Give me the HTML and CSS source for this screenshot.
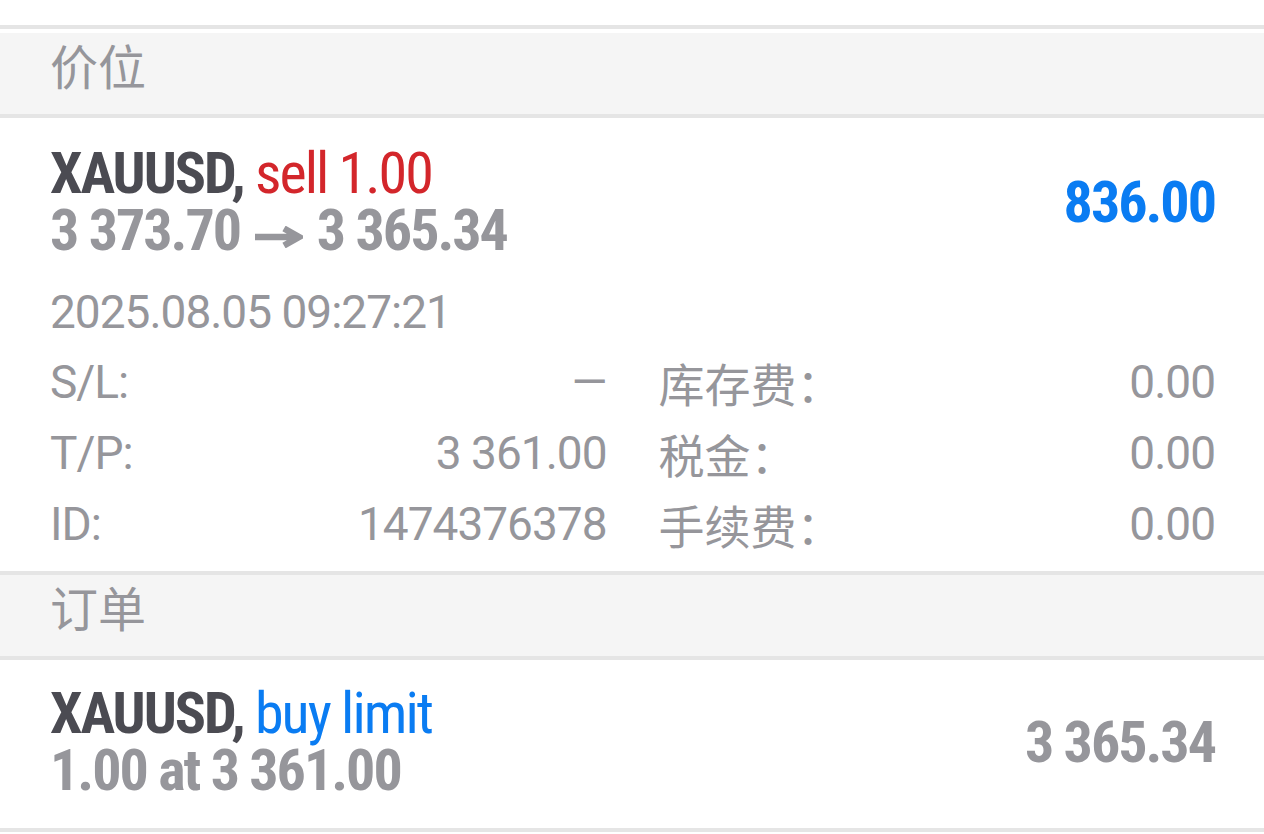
FILE: index.html
```html
<!DOCTYPE html>
<html lang="zh-CN">
<head>
<meta charset="utf-8">
<title>交易</title>
<link rel="stylesheet" href="styles.css">
</head>
<body>
<div class="top-space"></div>
<div class="divider"></div>
<div class="gap"></div>
<div class="section-head">价位</div>
<div class="divider"></div>
<section class="card">
  <div class="summary">
    <div class="titles">
      <div class="line1"><span class="sym">XAUUSD,</span> <span class="sell">sell 1.00</span></div>
      <div class="line2">3 373.70 <svg class="arrow" width="48" height="22" viewBox="0 0 48 22" aria-hidden="true"><path d="M0 11H43M29 2.5L44 11L29 19.5" fill="none" stroke="#96969b" stroke-width="6.5" stroke-linejoin="miter"/></svg> 3 365.34</div>
    </div>
    <div class="profit">836.00</div>
  </div>
  <div class="date">2025.08.05 09:27:21</div>
  <div class="details">
    <div class="kv"><span class="k">S/L:</span><span class="v">—</span></div>
    <div class="kv"><span class="k cjk">库存费：</span><span class="v">0.00</span></div>
    <div class="kv"><span class="k">T/P:</span><span class="v">3 361.00</span></div>
    <div class="kv"><span class="k cjk">税金：</span><span class="v">0.00</span></div>
    <div class="kv"><span class="k">ID:</span><span class="v">1474376378</span></div>
    <div class="kv"><span class="k cjk">手续费：</span><span class="v">0.00</span></div>
  </div>
</section>
<div class="divider"></div>
<div class="section-head">订单</div>
<div class="divider"></div>
<section class="card order">
  <div class="summary">
    <div class="titles">
      <div class="line1"><span class="sym">XAUUSD,</span> <span class="buy">buy limit</span></div>
      <div class="line2">1.00 at 3 361.00</div>
    </div>
    <div class="price">3 365.34</div>
  </div>
</section>
<div class="divider"></div>
</body>
</html>
```
FILE: styles.css
```css
html, body {
  margin: 0;
  padding: 0;
  background: #ffffff;
}
body {
  font-family: "Roboto Condensed", "Roboto", "Noto Sans CJK SC", sans-serif;
  color: #96969b;
  overflow: hidden;
}
.top-space {
  height: 25px;
}
.divider {
  height: 4px;
  background: #e5e5e5;
}
.gap {
  height: 4px;
}
.section-head {
  height: 81px;
  background: #f5f5f5;
  padding-left: 50px;
  display: flex;
  align-items: center;
  padding-bottom: 20px;
  box-sizing: border-box;
  font-family: "Noto Sans CJK SC", sans-serif;
  font-size: 48px;
  color: #96969b;
}
.card {
  padding: 27px 51px 11px 50px;
}
.card.order {
  padding: 25px 51px 29px 50px;
}
.summary {
  display: flex;
  justify-content: space-between;
  align-items: center;
}
.titles, .profit, .price {
  font-weight: 700;
  font-size: 58px;
  line-height: 57px;
  letter-spacing: -2px;
}
.profit, .price {
  margin-right: -2px;
}
.sym {
  color: #4b4b52;
}
.sell {
  color: #d3262b;
  font-weight: 400;
}
.buy {
  color: #0a7cf2;
  font-weight: 400;
}
.line2 {
  color: #96969b;
}
.arrow {
  display: inline-block;
  vertical-align: 2px;
  margin: 0 2px 0 4px;
}
.profit {
  color: #0a7cf2;
}
.price {
  color: #96969b;
}
.date {
  margin-top: 28px;
  font-family: "Roboto", "Noto Sans CJK SC", sans-serif;
  font-size: 46px;
  line-height: 50px;
  letter-spacing: -1px;
}
.details {
  margin-top: 10px;
  margin-right: -2px;
  display: grid;
  grid-template-columns: 1fr 1fr;
  column-gap: 52px;
}
.kv {
  display: flex;
  justify-content: space-between;
  font-family: "Roboto", "Noto Sans CJK SC", sans-serif;
  font-size: 46px;
  line-height: 71px;
  height: 71px;
  letter-spacing: -1px;
}
.k.cjk {
  font-family: "Noto Sans CJK SC", sans-serif;
  letter-spacing: 0;
}
```
